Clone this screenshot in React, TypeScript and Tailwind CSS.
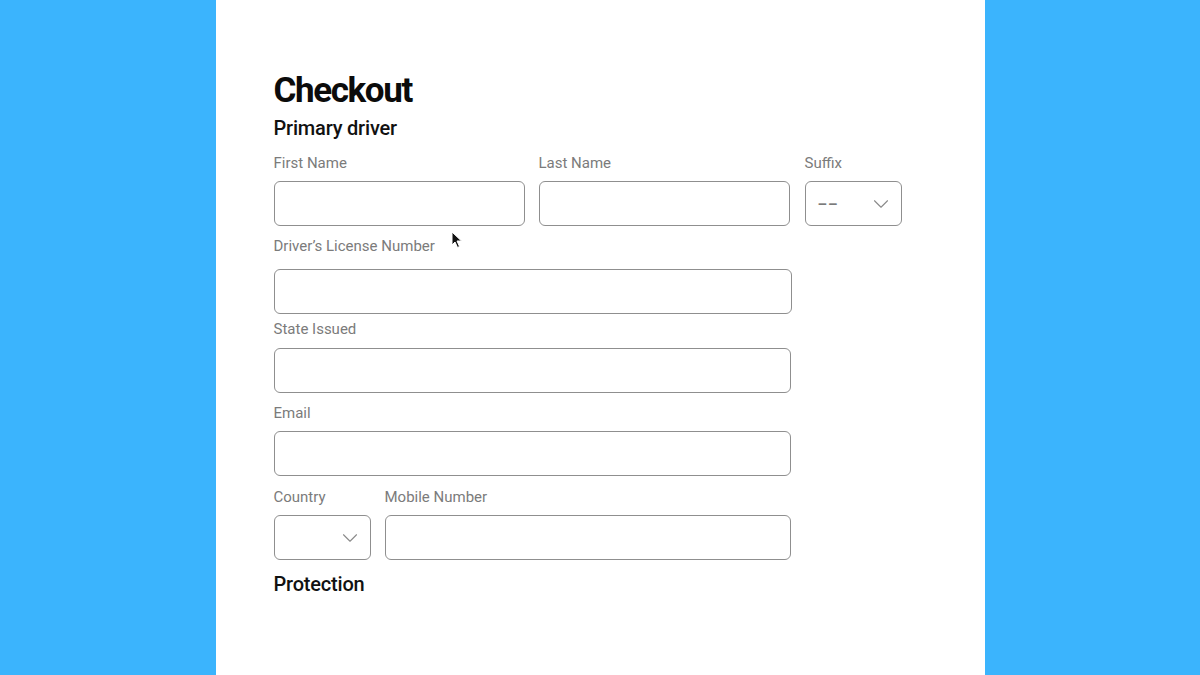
import { ChevronDown } from "lucide-react";

const label = "text-[15px] leading-[18px] text-[#7b7b7b]";
const box = "h-[45px] rounded-[6px] border border-[#8f8f8f] bg-white";

const Field = ({
	name,
	className,
	gap = "mt-[9px]",
}: {
	name: string;
	className: string;
	gap?: string;
}) => (
	<div className="flex flex-col">
		<span className={label}>{name}</span>
		<div className={`${box} ${gap} ${className}`} />
	</div>
);

const SelectBox = ({ name, value }: { name: string; value?: string }) => (
	<div className="flex flex-col">
		<span className={label}>{name}</span>
		<div
			className={`${box} mt-[9px] w-[97px] flex items-center justify-between pl-[12px] pr-[7px]`}
		>
			<span className="text-[15px] text-[#7a7a7a] font-bold tracking-[1px] pt-[2px]">
				{value}
			</span>
			<ChevronDown className="w-[26px] h-[26px] text-[#8a8a8a]" strokeWidth={1} />
		</div>
	</div>
);

export default function App() {
	return (
		<div
			className="w-full h-[675px] bg-[#3bb4fd] flex justify-center"
			style={{ fontFamily: "Roboto, 'Liberation Sans', sans-serif" }}
		>
			<div className="relative w-[769px] h-full bg-white pl-[58px] pt-[71px]">
				<h1 className="text-[35px] leading-[40px] font-bold tracking-[-0.04em] text-[#0b0b0b]">
					Checkout
				</h1>
				<h2 className="mt-[5px] text-[20px] leading-[24px] font-medium tracking-[-0.01em] text-[#111]">
					Primary driver
				</h2>

				<div className="mt-[14px] flex gap-[14px]">
					<Field name="First Name" className="w-[251px]" />
					<Field name="Last Name" className="w-[251px]" />
					<div className="ml-[1px]">
						<SelectBox name="Suffix" value="––" />
					</div>
				</div>

				<div className="mt-[11px]">
					<Field
						name="Driver’s License Number"
						className="w-[518px]"
						gap="mt-[14px]"
					/>
				</div>

				<div className="mt-[6px]">
					<Field name="State Issued" className="w-[517px]" gap="mt-[10px]" />
				</div>

				<div className="mt-[11px]">
					<Field name="Email" className="w-[517px]" />
				</div>

				<div className="mt-[12px] flex gap-[14px]">
					<SelectBox name="Country" />
					<Field name="Mobile Number" className="w-[406px]" />
				</div>

				<h2 className="mt-[12px] text-[20px] leading-[24px] font-medium tracking-[-0.01em] text-[#111]">
					Protection
				</h2>

				<svg
					className="absolute left-[235px] top-[231px]"
					width="12"
					height="18"
					viewBox="0 0 12 18"
				>
					<path
						d="M1 1 L1 14 L4 11 L6.5 16.5 L8.5 15.5 L6 10 L10.5 10 Z"
						fill="#111"
						stroke="#fff"
						strokeWidth="1"
					/>
				</svg>
			</div>
		</div>
	);
}
